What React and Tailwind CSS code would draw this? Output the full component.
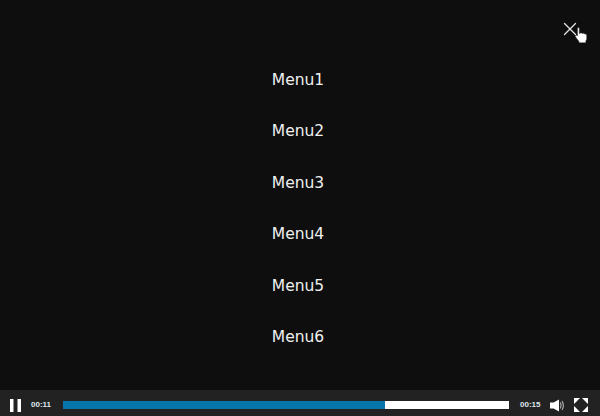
import { X } from "lucide-react";

const menus = ["Menu1", "Menu2", "Menu3", "Menu4", "Menu5", "Menu6"];

function HandCursor() {
  return (
    <svg width="12" height="16" viewBox="0 0 12 16" className="absolute left-[575px] top-[27px]">
      <path
        d="M2.500 1.200C2.500 .2 4.300 .2 4.300 1.200V6.500L5.800 6C6.500 5.800 7 6 7.200 6.400L8.400 6.300C9 6.300 9.400 6.500 9.600 6.900L10.400 7C11.200 7.100 11.700 7.700 11.700 8.500V11.500C11.700 12.600 11.200 13.300 10.800 14V15.800H4V14.600L.6 10C-.3 8.700 1.300 7.500 2.500 8.800Z"
        fill="#fff"
        stroke="#333"
        strokeWidth="0.5"
      />
    </svg>
  );
}

function PauseIcon() {
  return (
    <svg width="11" height="13" viewBox="0 0 11 13" className="shrink-0">
      <path d="M0 0h3.500v13H0zM7.500 0H11v13H7.500z" fill="#fff" />
    </svg>
  );
}

function VolumeIcon() {
  return (
    <svg width="14" height="13" viewBox="0 0 14 13" className="ml-[9px] shrink-0">
      <path d="M0 3.500h3.500L9 .5v12L3.500 9.500H0z" fill="#fff" />
      <path d="M10.300 3.500c.9 1.900.9 4.100 0 6M12 2c1.700 2.800 1.700 6.200 0 9" fill="none" stroke="#b8b8b8" strokeWidth="1.100" />
    </svg>
  );
}

function FullscreenIcon() {
  return (
    <svg width="14" height="14" viewBox="0 0 14 14" className="ml-[10px] shrink-0">
      <path
        d="M0 0h6L4.500 1.600 1.600 4.500 0 6zM14 0v6L12.400 4.500 9.500 1.600 8 0zM14 14H8L9.500 12.400 12.400 9.500 14 8zM0 14V8L1.600 9.500 4.500 12.400 6 14z"
        fill="#fff"
      />
    </svg>
  );
}

export default function App() {
  return (
    <div className="relative flex h-[416px] w-[600px] flex-col overflow-hidden bg-[#0e0e0e] font-['DejaVu_Sans',sans-serif] text-white">
      <div className="flex justify-end pr-[19px] pt-[18px]">
        <X size={22} strokeWidth={1.4} className="text-[#e6e6e6]" />
      </div>
      <HandCursor />
      <ul className="flex flex-1 flex-col items-center pt-[15px] pr-[4px]">
        {menus.map((menu) => (
          <li key={menu} className="flex h-[51.4px] shrink-0 items-center text-[15.5px] text-[#f0f0f0]">
            {menu}
          </li>
        ))}
      </ul>
      <div className="flex h-[26px] shrink-0 items-center bg-[#222222] pl-[10px] pr-[12px] pt-[4px] font-['Liberation_Sans',sans-serif]">
        <PauseIcon />
        <span className="ml-[10px] w-[32px] shrink-0 text-[8px] font-bold text-[#dfe6ee]">00:11</span>
        <div className="flex h-[8px] w-[446px] shrink-0">
          <div className="h-full w-[322px] bg-[#0675ac]" />
          <div className="h-full flex-1 bg-white" />
        </div>
        <span className="ml-[11px] w-[21px] shrink-0 text-[8px] font-bold text-[#dfe6ee]">00:15</span>
        <VolumeIcon />
        <FullscreenIcon />
      </div>
    </div>
  );
}
